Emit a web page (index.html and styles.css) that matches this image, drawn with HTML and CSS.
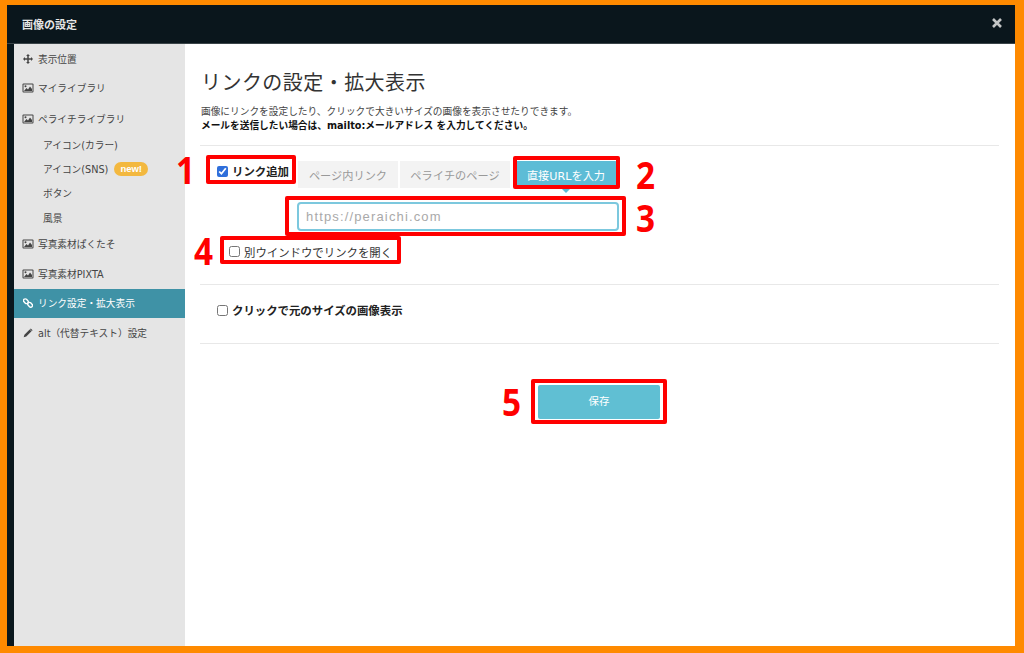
FILE: index.html
```html
<!DOCTYPE html>
<html lang="ja">
<head>
<meta charset="utf-8">
<title>画像の設定</title>
<link rel="stylesheet" href="styles.css">
</head>
<body>
<div class="window">
  <header class="topbar">
    <span class="topbar-title">画像の設定</span>
    <svg class="close" viewBox="0 0 12 12"><path d="M2 2l8 8M10 2l-8 8"/></svg>
  </header>
  <div class="body">
    <nav class="side">
      <a class="item first"><svg class="ico small" viewBox="0 0 12 12"><path class="solid" d="M6 0l2.300 2.400H6.900v2.700h2.700V3.700L12 6 9.600 8.300V6.900H6.900v2.700h1.400L6 12 3.700 9.600h1.400V6.900H2.400v1.400L0 6l2.400-2.300v1.400h2.700V2.400H3.700z"/></svg>表示位置</a>
      <a class="item lib"><svg class="ico" viewBox="0 0 12 12"><use href="#pic"/></svg>マイライブラリ</a>
      <a class="item lib2"><svg class="ico" viewBox="0 0 12 12"><use href="#pic"/></svg>ペライチライブラリ</a>
      <a class="sub">アイコン(カラー)</a>
      <a class="sub">アイコン(SNS)<span class="new">new!</span></a>
      <a class="sub">ボタン</a>
      <a class="sub">風景</a>
      <a class="item photo"><svg class="ico" viewBox="0 0 12 12"><use href="#pic"/></svg>写真素材ぱくたそ</a>
      <a class="item"><svg class="ico" viewBox="0 0 12 12"><use href="#pic"/></svg>写真素材PIXTA</a>
      <a class="item active"><svg class="ico small" viewBox="0 0 12 12"><g class="chain"><rect x="0.300" y="1.800" width="6.400" height="4.200" rx="2.100" transform="rotate(45 3.500 3.900)"/><rect x="5.300" y="6" width="6.400" height="4.200" rx="2.100" transform="rotate(45 8.500 8.100)"/></g></svg>リンク設定・拡大表示</a>
      <a class="item"><svg class="ico small" viewBox="0 0 12 12"><path class="solid" d="M8 1.800l2.200 2.200-6.300 6.300L.8 11.200l.9-3.100zM9.300.5L11.500 2.700l-.9.900L8.400 1.400z"/></svg>alt（代替テキスト）設定</a>
    </nav>
    <main class="main">
      <h1 class="title">リンクの設定・拡大表示</h1>
      <p class="desc">画像にリンクを設定したり、クリックで大きいサイズの画像を表示させたりできます。<br><b>メールを送信したい場合は、mailto:メールアドレス を入力してください。</b></p>
      <section class="link-sec">
        <div class="tab-row">
          <label class="chk strong"><input type="checkbox" checked>リンク追加</label>
          <div class="tabs">
            <span class="tab t1">ページ内リンク</span>
            <span class="tab t2">ペライチのページ</span>
            <span class="tab on">直接URLを入力</span>
          </div>
        </div>
        <input class="url" type="text" placeholder="https://peraichi.com">
        <label class="chk blank"><input type="checkbox">別ウインドウでリンクを開く</label>
      </section>
      <section class="zoom-sec">
        <label class="chk strong"><input type="checkbox">クリックで元のサイズの画像表示</label>
      </section>
      <div class="save-row"><button class="save">保存</button></div>
    </main>
  </div>
</div>

<div class="mark b1"></div><div class="mark b2"></div><div class="mark b3"></div><div class="mark b4"></div><div class="mark b5"></div>
<span class="num n1">1</span><span class="num n2">2</span><span class="num n3">3</span><span class="num n4">4</span><span class="num n5">5</span>

<svg class="defs" width="0" height="0"><defs><g id="pic"><rect x="0.500" y="1.500" width="11" height="9" rx="1" fill="currentColor"/><rect x="1.500" y="2.500" width="9" height="7" fill="#e5e5e5"/><path fill="currentColor" d="M2 9l2.500-3 1.500 1.500L8 4.500 10 7v2z"/><circle cx="3.500" cy="4.200" r="1" fill="currentColor"/></g></defs></svg>
</body>
</html>
```
FILE: styles.css
```css
* { box-sizing: border-box; }
html, body { margin: 0; height: 100%; }
body {
  position: relative;
  width: 1024px;
  height: 653px;
  overflow: hidden;
  background: #ff8a00;
  padding: 5px 9px 7px 7px;
  font-family: "DejaVu Sans", "Noto Sans CJK JP", sans-serif;
  color: #333;
}
.window {
  height: 100%;
  display: flex;
  flex-direction: column;
  background: #0a171d;
}
.topbar {
  height: 39px;
  flex: none;
  display: flex;
  align-items: center;
  justify-content: space-between;
  padding: 0 12px 0 15px;
  background: #0a161c;
  border-bottom: 1px solid #3a4448;
}
.topbar-title { color: #e6e6e6; font-size: 11px; font-weight: 700; }
.close { width: 12px; height: 12px; margin-top: -3px; fill: none; stroke: #c4c6c6; stroke-width: 2.600; }
.body { flex: 1; display: flex; min-height: 0; padding-left: 7px; }
.side {
  width: 171px;
  flex: none;
  background: #e5e5e5;
  font-size: 9.700px;
  color: #444;
}
.item {
  display: flex;
  align-items: center;
  height: 29.500px;
  padding-left: 8px;
  gap: 4px;
}
.lib2 { margin-top: 1.500px; height: 29px; margin-bottom: -1px; }
.ico { width: 12px; height: 12px; flex: none; color: #444; }
.small { width: 10px; height: 10px; margin: 0 1px; }
.solid { fill: currentColor; }
.chain { fill: none; stroke: #fff; stroke-width: 1.700; }
.sub {
  display: flex;
  align-items: center;
  height: 24.300px;
  padding-left: 29px;
}
.new {
  margin-left: 6px;
  padding: 0 6px;
  height: 14px;
  line-height: 14px;
  border-radius: 7px;
  background: #f3b83f;
  color: #fff;
  font-family: "Liberation Sans", sans-serif;
  font-size: 9.500px;
  font-weight: 700;
}
.active { background: #3f92a6; color: #fff; }
.main { flex: 1; background: #fff; padding: 0 16px 0 15px; min-width: 0; }
.title {
  margin: 25px 0 0 1px;
  font-size: 20px;
  line-height: 28px;
  font-weight: 400;
  letter-spacing: 0.450px;
  color: #333;
}
.desc {
  margin: 8px 0 0 1px;
  font-size: 9.700px;
  line-height: 14px;
  color: #444;
}
.desc b { color: #111; }
.link-sec {
  margin-top: 12px;
  border-top: 1px solid #e8e8e8;
  border-bottom: 1px solid #e8e8e8;
  height: 140px;
  padding-top: 15px;
}
.tab-row { display: flex; align-items: flex-start; padding-left: 17px; }
.chk { display: flex; align-items: center; font-size: 11.400px; color: #333; }
.chk input { margin: 0 4px 0 0; width: 11px; height: 11px; accent-color: #2f6fdb; }
.strong { font-weight: 700; font-size: 11.400px; color: #222; }
.tab-row .chk { height: 20px; }
.tabs { display: flex; margin-left: 9px; font-size: 11.200px; }
.tab {
  height: 27px;
  display: flex;
  align-items: center;
  justify-content: center;
  background: #f3f3f3;
  color: #999;
}
.t1 { width: 100px; margin-right: 2px; }
.t2 { width: 110px; margin-right: 4px; }
.on { position: relative; width: 104px; background: #5dbcd6; color: #fff; border-radius: 3px; }
.on::after {
  content: "";
  position: absolute;
  left: 47px;
  bottom: -5px;
  border: 5px solid transparent;
  border-bottom: 0;
  border-top-color: #5dbcd6;
}
.url {
  display: block;
  margin: 14px 0 0 97px;
  width: 322px;
  height: 29px;
  border: 2.500px solid #7cc8de;
  border-radius: 4px;
  padding: 0 7px;
  font-size: 13px;
  letter-spacing: 1.150px;
  font-family: "Liberation Sans", sans-serif;
  outline: none;
}
.url::placeholder { color: #a9a9a9; }
.blank { margin: 13px 0 0 29px; height: 15px; }
.zoom-sec {
  height: 59px;
  border-bottom: 1px solid #e8e8e8;
  padding: 17px 0 0 17px;
}
.save-row { display: flex; justify-content: center; padding: 41px 0 0 0; margin-left: -1px; }
.save {
  width: 122px;
  height: 34px;
  border: 0;
  border-radius: 2px;
  background: #60bfd3;
  color: #fff;
  font-size: 10.500px;
  font-family: inherit;
  padding: 0 0 4px;
}
.mark { position: absolute; border: 4px solid #f00; border-radius: 2px; }
.b1 { left: 206px; top: 155px; width: 90px; height: 29px; }
.b2 { left: 513px; top: 156px; width: 107px; height: 33px; }
.b3 { left: 285px; top: 196px; width: 341px; height: 40px; }
.b4 { left: 220px; top: 236px; width: 181px; height: 28px; }
.b5 { left: 531px; top: 379px; width: 136px; height: 45px; }
.num {
  position: absolute;
  color: #f00;
  font-family: "Noto Sans", sans-serif;
  font-weight: 700;
  font-size: 37px;
  line-height: 30px;
  transform: scaleX(0.900);
}
.n1 { left: 175px; top: 155px; }
.n2 { left: 635px; top: 160px; }
.n3 { left: 635px; top: 203px; }
.n4 { left: 193px; top: 236px; }
.n5 { left: 501px; top: 387px; }
.defs { position: absolute; }
```
